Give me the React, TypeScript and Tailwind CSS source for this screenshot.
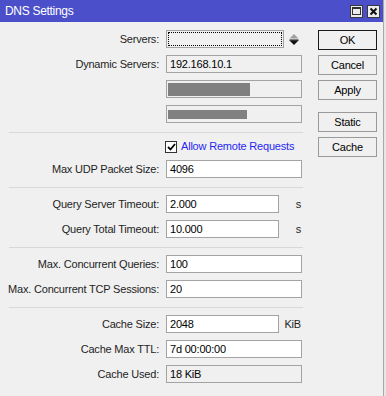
import type { ReactNode } from "react";

export default function App() {
  return (
    <div className="w-[386px] h-[396px] bg-[#e6e6e6] pr-[2px] font-['Liberation_Sans',Arial,sans-serif] text-[11px] tracking-[-0.2px] text-[#1e1e1e]">
      <div className="w-[384px] h-full flex flex-col bg-[#f0f0f0] border-r border-[#a8a8a8]">
        <TitleBar />
        <div className="flex">
          <FormColumn />
          <ButtonColumn />
        </div>
      </div>
    </div>
  );
}

function TitleBar() {
  return (
    <div className="h-[22px] bg-[#4b4fc9] flex items-center pl-[5px] pr-[3px]">
      <span className="text-white text-[12px] tracking-[-0.3px] flex-1">DNS Settings</span>
      <div className="flex gap-[4px]">
        <div className="w-[13px] h-[13px] bg-[#ececec] border border-[#3a3a3a] flex items-center justify-center">
          <div className="w-[9px] h-[8px] border border-[#333] border-t-2" />
        </div>
        <div className="w-[13px] h-[13px] bg-[#ececec] border border-[#3a3a3a] flex items-center justify-center">
          <svg width="9" height="9" viewBox="0 0 9 9">
            <path d="M1.5 1.5 L7.5 7.5 M7.5 1.5 L1.5 7.5" stroke="#111" strokeWidth="2" />
          </svg>
        </div>
      </div>
    </div>
  );
}

function Divider() {
  return <div className="ml-[9px] w-[294px] h-px bg-[#d8d8d8] mt-[9px] mb-[7px]" />;
}

function Row({ label, children, unit }: { label?: string; children: ReactNode; unit?: string }) {
  return (
    <div className="flex items-center h-[18px]">
      <div className="w-[159px] text-right whitespace-nowrap">{label}</div>
      <div className="ml-[7px] flex items-center">
        {children}
        {unit && <span className="w-[22px] text-right">{unit}</span>}
      </div>
    </div>
  );
}

function Field({ value, short, gray }: { value?: string; short?: boolean; gray?: boolean }) {
  return (
    <div
      className={`h-[18px] border border-[#a3a3a3] flex items-center px-[3px] text-black ${
        short ? "w-[113px]" : "w-[136px]"
      } ${gray ? "bg-[#f0f0f0]" : "bg-white"}`}
    >
      {value}
    </div>
  );
}

function Bar({ w, h }: { w: string; h: string }) {
  return (
    <div className="h-[18px] w-[136px] border border-[#a3a3a3] bg-[#f0f0f0] flex items-center px-[1px]">
      <div className={`bg-[#808080] ${w} ${h}`} />
    </div>
  );
}

function FormColumn() {
  return (
    <div className="w-[310px] pt-[8px] flex flex-col">
      <div className="flex flex-col gap-[7px]">
        <Row label="Servers:">
          <div className="h-[18px] w-[118px] border border-[#a3a3a3] bg-[#f0f0f0] p-[1px]">
            <div className="w-full h-full border border-dotted border-black" />
          </div>
          <svg className="ml-[5px]" width="10" height="11" viewBox="0 0 10 11">
            <polygon points="5,0 0.5,4.5 9.5,4.5" fill="#a0a0a0" />
            <rect x="0.5" y="5.5" width="9" height="1.2" fill="#111" />
            <polygon points="0.5,6.5 9.5,6.5 5,11" fill="#111" />
          </svg>
        </Row>
        <Row label="Dynamic Servers:">
          <Field value="192.168.10.1" gray />
        </Row>
        <Row>
          <Bar w="w-[82px]" h="h-[13px]" />
        </Row>
        <Row>
          <Bar w="w-[79px]" h="h-[9px]" />
        </Row>
      </div>
      <Divider />
      <div className="flex flex-col gap-[7px]">
        <div className="flex items-center h-[13px] pl-[165px]">
          <div className="w-[12px] h-[12px] border border-[#333] bg-white flex items-center justify-center">
            <svg width="9" height="8" viewBox="0 0 9 8">
              <path d="M1 4 L3.5 6.5 L8 1" stroke="#000" strokeWidth="1.8" fill="none" />
            </svg>
          </div>
          <span className="ml-[4px] text-[#2727f5]">Allow Remote Requests</span>
        </div>
        <Row label="Max UDP Packet Size:">
          <Field value="4096" />
        </Row>
      </div>
      <Divider />
      <div className="flex flex-col gap-[7px]">
        <Row label="Query Server Timeout:" unit="s">
          <Field value="2.000" short />
        </Row>
        <Row label="Query Total Timeout:" unit="s">
          <Field value="10.000" short />
        </Row>
      </div>
      <Divider />
      <div className="flex flex-col gap-[7px]">
        <Row label="Max. Concurrent Queries:">
          <Field value="100" />
        </Row>
        <Row label="Max. Concurrent TCP Sessions:">
          <Field value="20" />
        </Row>
      </div>
      <Divider />
      <div className="flex flex-col gap-[7px]">
        <Row label="Cache Size:" unit="KiB">
          <Field value="2048" short />
        </Row>
        <Row label="Cache Max TTL:">
          <Field value="7d 00:00:00" />
        </Row>
        <Row label="Cache Used:">
          <Field value="18 KiB" gray />
        </Row>
      </div>
    </div>
  );
}

function Btn({ children, primary }: { children: ReactNode; primary?: boolean }) {
  return (
    <button
      className={`w-[59px] h-[20px] border bg-[#f0f0f0] flex items-center justify-center text-black ${
        primary ? "border-[#1a1a1a]" : "border-[#9a9a9a]"
      }`}
    >
      {children}
    </button>
  );
}

function ButtonColumn() {
  return (
    <div className="ml-[8px] pt-[8px] flex flex-col">
      <div className="flex flex-col gap-[5px]">
        <Btn primary>OK</Btn>
        <Btn>Cancel</Btn>
        <Btn>Apply</Btn>
      </div>
      <div className="flex flex-col gap-[5px] mt-[12px]">
        <Btn>Static</Btn>
        <Btn>Cache</Btn>
      </div>
    </div>
  );
}
